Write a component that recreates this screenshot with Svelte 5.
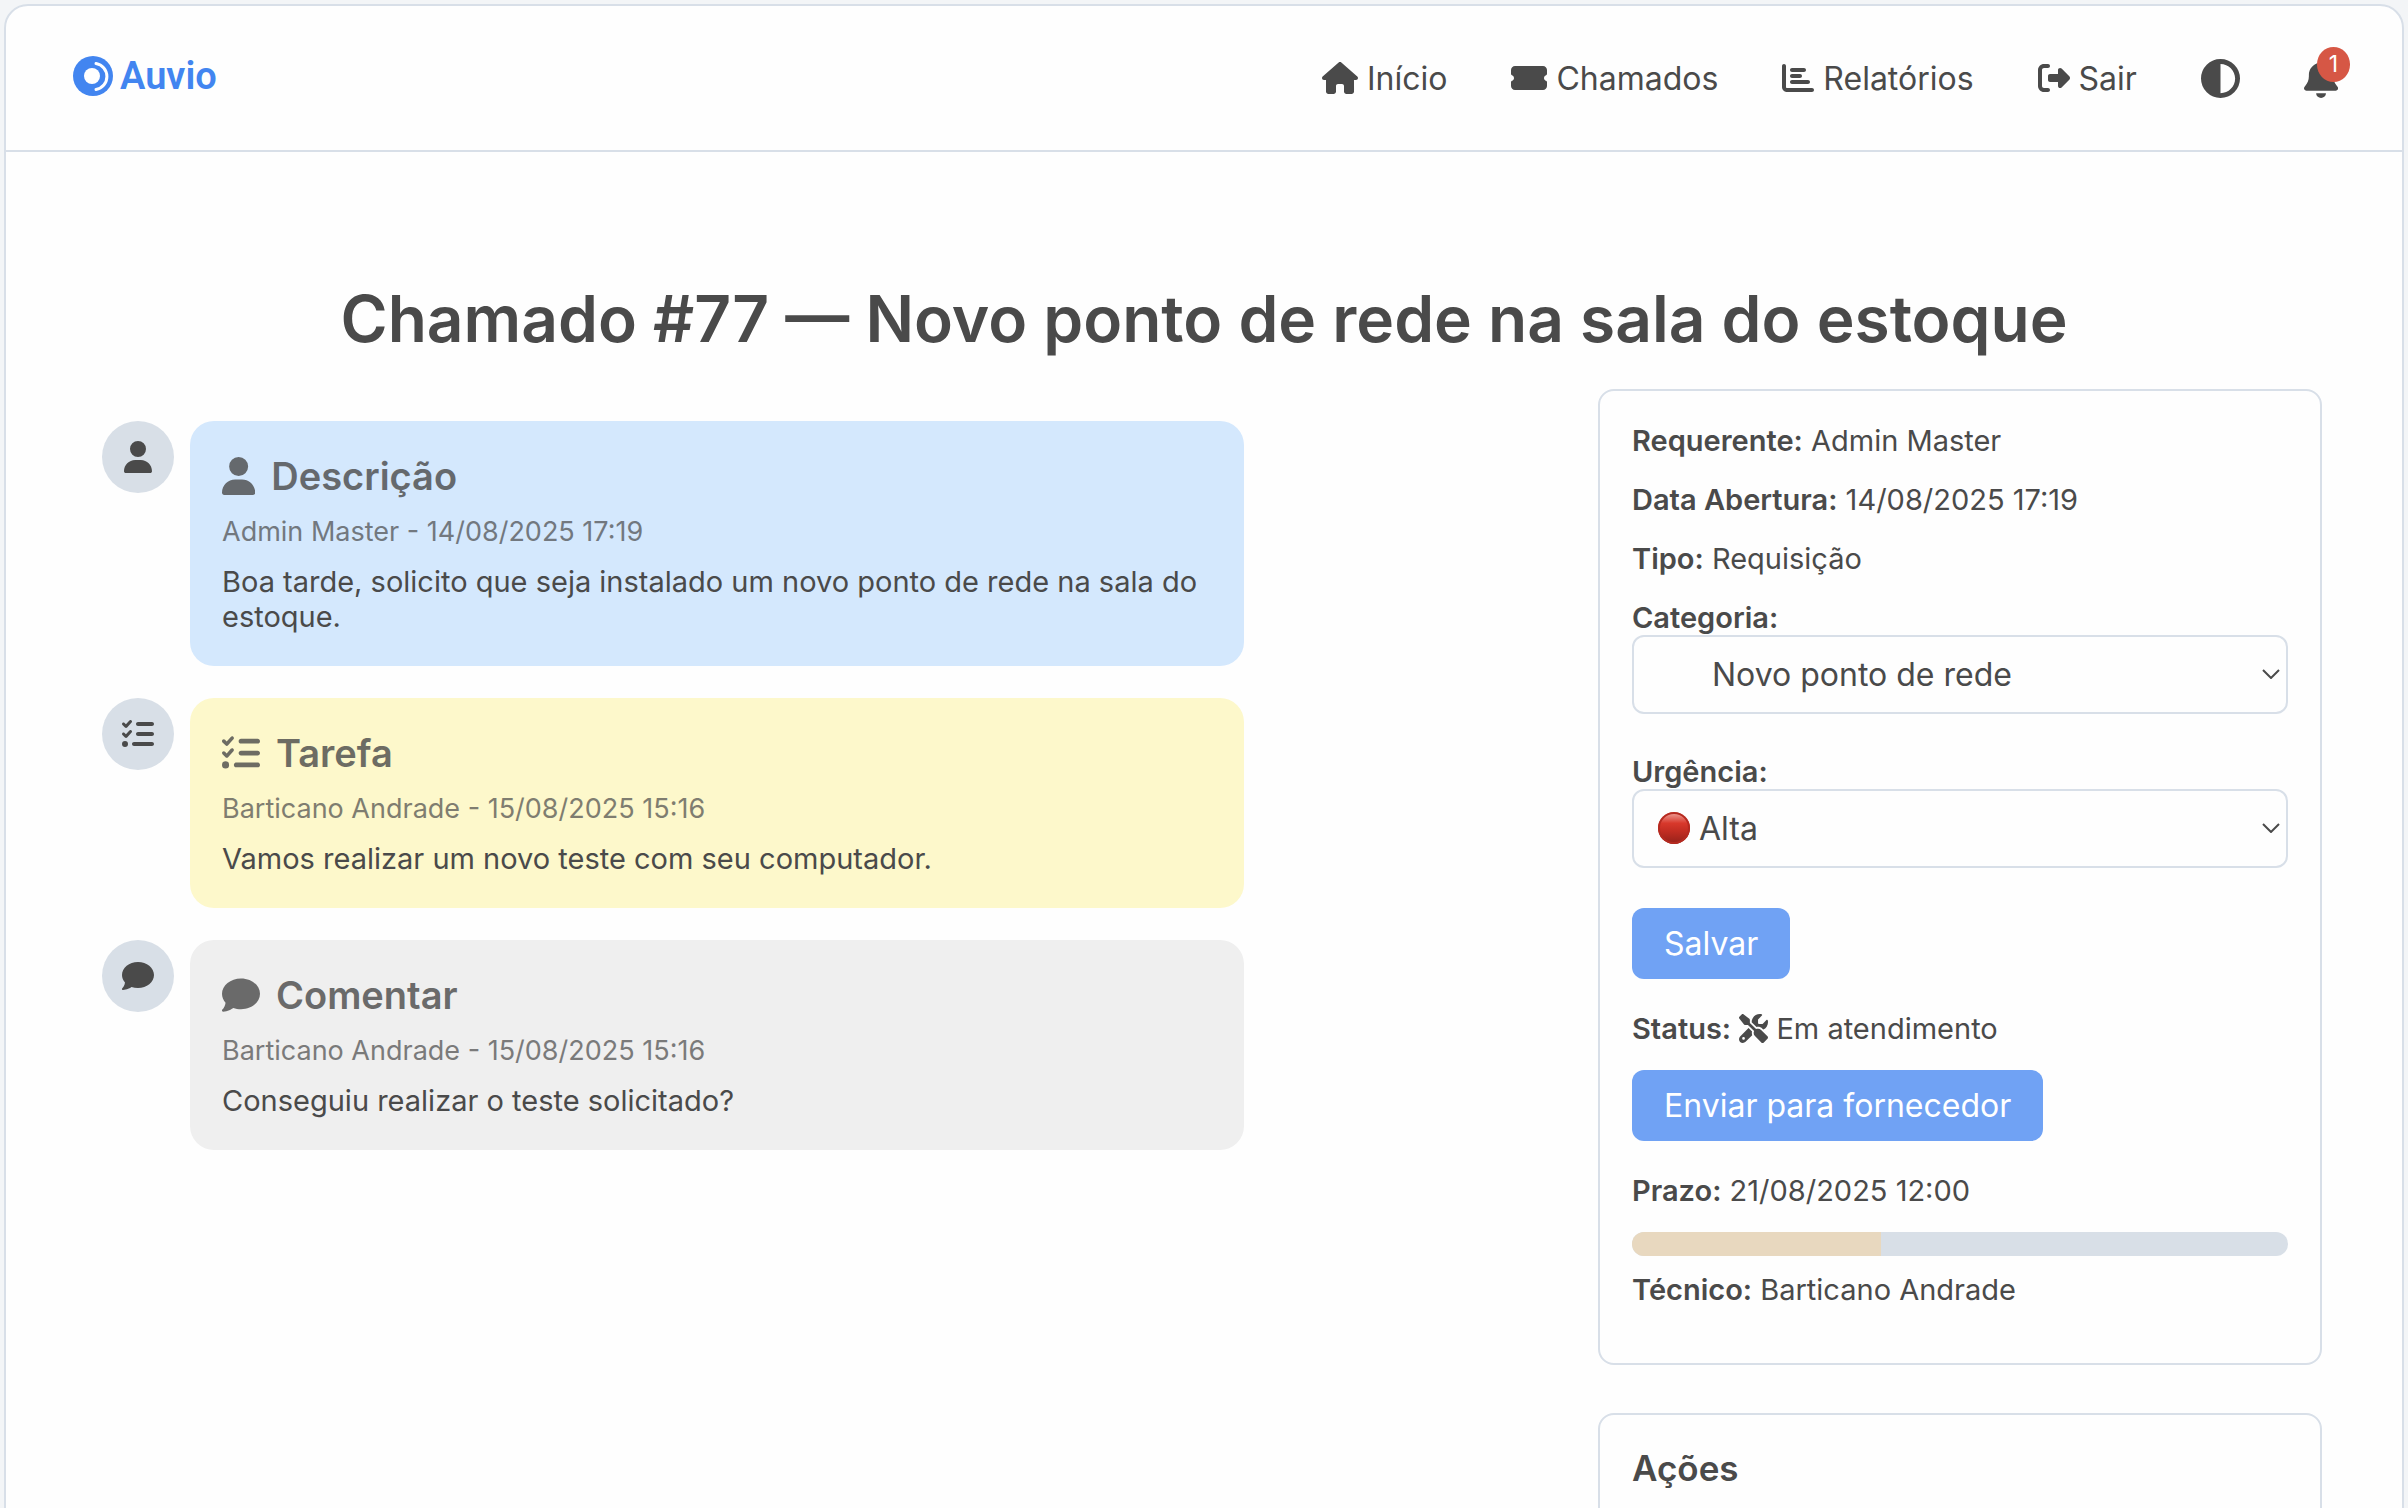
<script lang="ts">
  type Icon = { width: number; d: string };

  const icons: Record<string, Icon> = {
    house: { width: 576, d: 'M575.8 255.5c0 18-15 32.1-32 32.1h-32l.7 160.2c0 2.7-.2 5.4-.5 8.1V472c0 22.1-17.9 40-40 40H456c-1.1 0-2.2 0-3.3-.1c-1.4 .1-2.8 .1-4.2 .1H416 392c-22.1 0-40-17.9-40-40V448 384c0-17.7-14.3-32-32-32H256c-17.7 0-32 14.3-32 32v64 24c0 22.1-17.9 40-40 40H160 128.1c-1.5 0-3-.1-4.5-.2c-1.2 .1-2.4 .2-3.6 .2H104c-22.1 0-40-17.9-40-40V360c0-.9 0-1.9 .1-2.8V287.6H32c-18 0-32-14-32-32.1c0-9 3-17 10-24L266.4 8c7-7 15-8 22-8s15 2 21 7L564.8 231.5c8 7 12 15 11 24z' },
    ticket: { width: 576, d: 'M0 128C0 92.7 28.7 64 64 64H512c35.3 0 64 28.7 64 64v64c0 8.8-7.4 15.7-15.7 18.6C541.5 217.1 528 235 528 256s13.5 38.9 32.3 45.4c8.3 2.9 15.7 9.8 15.7 18.6v64c0 35.3-28.7 64-64 64H64c-35.3 0-64-28.7-64-64V320c0-8.8 7.4-15.7 15.7-18.6C34.5 294.9 48 277 48 256s-13.5-38.9-32.3-45.4C7.4 207.7 0 200.8 0 192V128z' },
    chart: { width: 512, d: 'M32 32c17.7 0 32 14.3 32 32V400c0 8.8 7.2 16 16 16H480c17.7 0 32 14.3 32 32s-14.3 32-32 32H80c-44.2 0-80-35.8-80-80V64C0 46.3 14.3 32 32 32zm96 96c0-17.7 14.3-32 32-32l192 0c17.7 0 32 14.3 32 32s-14.3 32-32 32H160c-17.7 0-32-14.3-32-32zm32 64H288c17.7 0 32 14.3 32 32s-14.3 32-32 32H160c-17.7 0-32-14.3-32-32s14.3-32 32-32zm0 96H416c17.7 0 32 14.3 32 32s-14.3 32-32 32H160c-17.7 0-32-14.3-32-32s14.3-32 32-32z' },
    exit: { width: 512, d: 'M377.9 105.9L500.7 228.7c7.2 7.2 11.3 17.1 11.3 27.3s-4.1 20.1-11.3 27.3L377.9 406.1c-6.4 6.4-15 9.9-24 9.9c-18.7 0-33.9-15.2-33.9-33.9l0-62.1-128 0c-17.7 0-32-14.3-32-32l0-64c0-17.7 14.3-32 32-32l128 0 0-62.1c0-18.7 15.2-33.9 33.9-33.9c9 0 17.6 3.6 24 9.9zM160 96L96 96c-17.7 0-32 14.3-32 32l0 256c0 17.7 14.3 32 32 32l64 0c17.7 0 32 14.3 32 32s-14.3 32-32 32l-64 0c-53 0-96-43-96-96L0 128C0 75 43 32 96 32l64 0c17.7 0 32 14.3 32 32s-14.3 32-32 32z' },
    contrast: { width: 512, d: 'M448 256c0-106-86-192-192-192V448c106 0 192-86 192-192zM0 256a256 256 0 1 1 512 0A256 256 0 1 1 0 256z' },
    bell: { width: 448, d: 'M224 0c-17.7 0-32 14.3-32 32V51.2C119 66 64 130.6 64 208v18.8c0 47-17.3 92.4-48.5 127.6l-7.4 8.3c-8.4 9.4-10.4 22.9-5.3 34.4S19.4 416 32 416H416c12.6 0 24-7.4 29.2-18.9s3.1-25-5.3-34.4l-7.4-8.3C401.3 319.2 384 273.9 384 226.8V208c0-77.4-55-142-128-156.8V32c0-17.7-14.3-32-32-32zm45.3 493.3c12-12 18.7-28.3 18.7-45.3H224 160c0 17 6.7 33.3 18.7 45.3s28.3 18.7 45.3 18.7s33.3-6.7 45.3-18.7z' },
    user: { width: 448, d: 'M224 256A128 128 0 1 0 224 0a128 128 0 1 0 0 256zm-45.7 48C79.8 304 0 383.8 0 482.3C0 498.7 13.3 512 29.7 512H418.3c16.4 0 29.7-13.3 29.7-29.7C448 383.8 368.2 304 269.7 304H178.3z' },
    tasks: { width: 512, d: 'M152.1 38.2c9.9 8.9 10.7 24 1.8 33.9l-72 80c-4.4 4.9-10.6 7.8-17.2 7.9s-12.9-2.4-17.6-7L7 113C-2.3 103.6-2.3 88.4 7 79s24.6-9.4 33.9 0l22.1 22.1 55.1-61.2c8.9-9.9 24-10.7 33.9-1.8zm0 160c9.9 8.9 10.7 24 1.8 33.9l-72 80c-4.4 4.9-10.6 7.8-17.2 7.9s-12.9-2.4-17.6-7L7 273c-9.4-9.4-9.4-24.6 0-33.9s24.6-9.4 33.9 0l22.1 22.1 55.1-61.2c8.9-9.9 24-10.7 33.9-1.8zM224 96c0-17.7 14.3-32 32-32H480c17.7 0 32 14.3 32 32s-14.3 32-32 32H256c-17.7 0-32-14.3-32-32zm0 160c0-17.7 14.3-32 32-32H480c17.7 0 32 14.3 32 32s-14.3 32-32 32H256c-17.7 0-32-14.3-32-32zM160 416c0-17.7 14.3-32 32-32H480c17.7 0 32 14.3 32 32s-14.3 32-32 32H192c-17.7 0-32-14.3-32-32zM48 368a48 48 0 1 1 0 96 48 48 0 1 1 0-96z' },
    comment: { width: 512, d: 'M512 240c0 114.9-114.6 208-256 208c-37.1 0-72.3-6.4-104.1-17.9c-11.9 8.7-31.3 20.6-54.3 30.6C73.6 471.1 44.7 480 16 480c-6.5 0-12.3-3.9-14.8-9.9c-2.5-6-1.1-12.8 3.4-17.4l.3-.3c.3-.3 .7-.7 1.3-1.4c1.1-1.2 2.8-3.1 4.9-5.7c4.1-5 9.6-12.4 15.2-21.6c10-16.6 19.5-38.4 21.4-62.9C17.7 326.8 0 285.1 0 240C0 125.1 114.6 32 256 32s256 93.1 256 208z' },
    tools: { width: 512, d: 'M78.6 5C69.1-2.4 55.6-1.5 47 7L7 47c-8.5 8.5-9.4 22-2.1 31.6l80 104c4.5 5.9 11.6 9.4 19 9.4h54.1l109 109c-14.7 29-10 65.4 14.3 89.6l112 112c12.5 12.5 32.8 12.5 45.3 0l64-64c12.5-12.5 12.5-32.8 0-45.3l-112-112c-24.2-24.2-60.6-29-89.6-14.3l-109-109V104c0-7.5-3.5-14.5-9.4-19L78.6 5zM19.9 396.1C7.2 408.8 0 426.1 0 444.1C0 481.6 30.4 512 67.9 512c18 0 35.3-7.2 48-19.9L233.7 374.3c-7.8-20.9-9-43.6-3.6-65.1l-61.7-61.7L19.9 396.1zM512 144c0-10.5-1.1-20.7-3.2-30.5c-2.4-11.2-16.1-14.1-24.2-6l-63.9 63.9c-3 3-7.1 4.7-11.3 4.7H352c-8.8 0-16-7.2-16-16V102.6c0-4.2 1.7-8.3 4.7-11.3l63.9-63.9c8.1-8.1 5.2-21.8-6-24.2C388.7 1.1 378.5 0 368 0C288.5 0 224 64.5 224 144l0 .8 85.3 85.3c36-9.1 75.8 .5 104 28.7L429 274.5c49-23 83-72.8 83-130.5zM56 432a24 24 0 1 1 48 0 24 24 0 1 1 -48 0z' }
  };

  const links = [
    { icon: 'house', label: 'Início' },
    { icon: 'ticket', label: 'Chamados' },
    { icon: 'chart', label: 'Relatórios' },
    { icon: 'exit', label: 'Sair' }
  ];

  const entries = [
    {
      kind: 'description',
      icon: 'user',
      title: 'Descrição',
      meta: 'Admin Master - 14/08/2025 17:19',
      text: 'Boa tarde, solicito que seja instalado um novo ponto de rede na sala do estoque.'
    },
    {
      kind: 'task',
      icon: 'tasks',
      title: 'Tarefa',
      meta: 'Barticano Andrade - 15/08/2025 15:16',
      text: 'Vamos realizar um novo teste com seu computador.'
    },
    {
      kind: 'comment',
      icon: 'comment',
      title: 'Comentar',
      meta: 'Barticano Andrade - 15/08/2025 15:16',
      text: 'Conseguiu realizar o teste solicitado?'
    }
  ];

  // subcategories are indented inside the select
  const indent = '\u00a0'.repeat(6);

  let category = $state('ponto');
  let urgency = $state('alta');
  let progress = $state(38);
</script>

{#snippet icon(name: string)}
  <svg class="icon" viewBox="0 0 {icons[name].width} 512" aria-hidden="true"><path d={icons[name].d} /></svg>
{/snippet}

{#snippet chevron()}
  <svg class="chevron" viewBox="0 0 18 10" aria-hidden="true"><path d="M1 1l8 8 8-8" /></svg>
{/snippet}

<div class="page">
  <div class="frame">
    <header>
      <a class="logo" href="#inicio" aria-label="Auvio">
        <svg viewBox="0 0 40 40" aria-hidden="true">
          <circle class="disc" cx="20" cy="20" r="20" />
          <circle class="hole" cx="19" cy="20" r="8" />
          <path class="arc" d="M23 7.500a13.200 13.200 0 0 1 0 26" />
        </svg>
        <span>Auvio</span>
      </a>
      <nav>
        {#each links as link}
          <a class="nav-link" href="#{link.icon}">{@render icon(link.icon)}<span>{link.label}</span></a>
        {/each}
        <button class="icon-button" aria-label="Alternar tema">{@render icon('contrast')}</button>
        <button class="icon-button" aria-label="Notificações">
          {@render icon('bell')}
          <span class="badge">1</span>
        </button>
      </nav>
    </header>

    <main>
      <h1>Chamado #77 — Novo ponto de rede na sala do estoque</h1>
      <div class="columns">
        <section class="timeline">
          {#each entries as entry}
            <div class="entry">
              <div class="avatar">{@render icon(entry.icon)}</div>
              <article class="card {entry.kind}">
                <h2>{@render icon(entry.icon)}{entry.title}</h2>
                <p class="meta">{entry.meta}</p>
                <p>{entry.text}</p>
              </article>
            </div>
          {/each}
        </section>

        <aside>
          <section class="panel">
            <p><strong>Requerente:</strong> Admin Master</p>
            <p><strong>Data Abertura:</strong> 14/08/2025 17:19</p>
            <p><strong>Tipo:</strong> Requisição</p>
            <div class="field">
              <label for="category">Categoria:</label>
              <div class="select">
                <select id="category" bind:value={category}>
                  <option value="ponto">{indent}Novo ponto de rede</option>
                </select>
                {@render chevron()}
              </div>
            </div>
            <div class="field">
              <label for="urgency">Urgência:</label>
              <div class="select with-dot">
                <select id="urgency" bind:value={urgency}>
                  <option value="alta">Alta</option>
                </select>
                <span class="dot"></span>
                {@render chevron()}
              </div>
            </div>
            <button class="action">Salvar</button>
            <p class="status"><strong>Status:</strong> {@render icon('tools')} Em atendimento</p>
            <button class="action">Enviar para fornecedor</button>
            <p><strong>Prazo:</strong> 21/08/2025 12:00</p>
            <div class="bar" role="progressbar" aria-label="Prazo" aria-valuenow={progress}>
              <div class="fill" style="width: {progress}%"></div>
            </div>
            <p><strong>Técnico:</strong> Barticano Andrade</p>
          </section>

          <section class="panel actions">
            <h3>Ações</h3>
          </section>
        </aside>
      </div>
    </main>
  </div>
</div>

<style>
  :global(body) {
    background: #f3f5f7;
  }
  .page {
    height: 100vh;
    overflow-y: auto;
    scrollbar-width: none;
    color: #4a4a4a;
    font-family: Inter, "Liberation Sans", sans-serif;
    font-size: 29px;
    line-height: 35px;
  }
  .frame {
    margin: 4px;
    border: 2px solid #d8dfe8;
    border-radius: 24px;
    background: #fefefe;
  }
  .icon {
    height: 1em;
    fill: currentColor;
    flex: none;
  }
  h1, h2, h3, p {
    margin: 0;
  }

  header {
    display: flex;
    align-items: center;
    justify-content: space-between;
    height: 144px;
    padding: 0 64px;
    border-bottom: 2px solid #d8dfe8;
  }
  .logo {
    display: flex;
    align-items: center;
    gap: 7px;
    padding: 0 0 4px 3px;
    color: #4285f0;
    font-family: Roboto, Inter, sans-serif;
    font-size: 38px;
    font-weight: 600;
    text-decoration: none;
  }
  .logo svg {
    width: 40px;
    height: 40px;
  }
  .disc {
    fill: #4285f0;
  }
  .hole {
    fill: #fff;
  }
  .arc {
    fill: none;
    stroke: #fff;
    stroke-width: 3;
    stroke-linecap: round;
  }
  nav {
    display: flex;
    align-items: center;
    gap: 64px;
    font-size: 32px;
    line-height: 39px;
  }
  .nav-link {
    display: flex;
    align-items: center;
    gap: 9px;
    color: inherit;
    text-decoration: none;
  }
  .icon-button {
    position: relative;
    display: flex;
    padding: 0;
    border: none;
    background: none;
    color: inherit;
    font-family: inherit;
    font-size: 39px;
    cursor: pointer;
  }
  .badge {
    position: absolute;
    top: -12px;
    right: -12px;
    padding: 4px 12px;
    border-radius: 50%;
    background: #d65745;
    color: #fff;
    font-size: 23px;
    line-height: 27px;
  }

  main {
    padding: 128px 80px 80px;
  }
  h1 {
    margin-bottom: 32px;
    font-size: 64px;
    font-weight: 600;
    line-height: 77px;
    text-align: center;
  }
  .columns {
    display: grid;
    grid-template-columns: 2fr 1fr;
    gap: 64px;
  }

  .timeline {
    display: flex;
    flex-direction: column;
    gap: 32px;
    box-sizing: border-box;
    width: 80%;
    padding: 32px 0 0 16px;
  }
  .entry {
    display: flex;
    align-items: flex-start;
    gap: 16px;
  }
  .avatar {
    display: flex;
    align-items: center;
    justify-content: center;
    flex: none;
    width: 72px;
    height: 72px;
    border-radius: 50%;
    background: #d8dfe7;
    font-size: 32px;
  }
  .card {
    display: flex;
    flex: 1;
    flex-direction: column;
    gap: 16px;
    padding: 32px;
    border-radius: 24px;
  }
  .description { background: #d4e8fd; }
  .task { background: #fdf8cb; }
  .comment { background: #efefef; }
  h2 {
    display: flex;
    align-items: center;
    gap: 16px;
    font-size: 38px;
    font-weight: 600;
    line-height: 46px;
    opacity: 0.8;
  }
  .meta {
    font-size: 27px;
    line-height: 33px;
    opacity: 0.7;
  }

  aside {
    display: flex;
    flex-direction: column;
    gap: 48px;
  }
  .panel {
    padding: 32px 32px 56px;
    border: 2px solid #d8dfe8;
    border-radius: 16px;
  }
  .panel p {
    margin-bottom: 24px;
  }
  .panel p:last-child {
    margin-bottom: 0;
  }
  strong, label {
    font-weight: 600;
  }
  label {
    display: block;
  }
  .field {
    margin-bottom: 40px;
  }
  .select {
    position: relative;
  }
  select {
    display: block;
    width: 100%;
    height: 79px;
    padding: 0 24px;
    border: 2px solid #d8dfe8;
    border-radius: 12px;
    background: #fefefe;
    color: inherit;
    font-family: inherit;
    font-size: 32px;
    appearance: none;
  }
  .with-dot select {
    padding-left: 65px;
  }
  .dot {
    position: absolute;
    top: 23px;
    left: 26px;
    width: 32px;
    height: 32px;
    border-radius: 50%;
    background: linear-gradient(#f0a8a0, #d8382b 35%, #c22d22 60%, #94211a);
    box-shadow: inset 0 0 0 2px #b52a20;
    pointer-events: none;
  }
  .chevron {
    position: absolute;
    top: 34px;
    right: 8px;
    width: 18px;
    height: 10px;
    fill: none;
    stroke: #4a4a4a;
    stroke-width: 2;
    pointer-events: none;
  }
  .action {
    display: block;
    margin-bottom: 32px;
    padding: 16px 32px;
    border: none;
    border-radius: 12px;
    background: #70a2f4;
    color: #fff;
    font-family: inherit;
    font-size: 32px;
    line-height: 39px;
    cursor: pointer;
  }
  .status .icon {
    vertical-align: -4px;
  }
  .bar {
    height: 24px;
    margin-bottom: 16px;
    border-radius: 12px;
    background: #d8dfe7;
    overflow: hidden;
  }
  .fill {
    height: 100%;
    background: #e8d8bf;
  }
  .actions {
    min-height: 240px;
  }
  h3 {
    font-size: 35px;
    font-weight: 600;
    line-height: 42px;
  }
</style>
